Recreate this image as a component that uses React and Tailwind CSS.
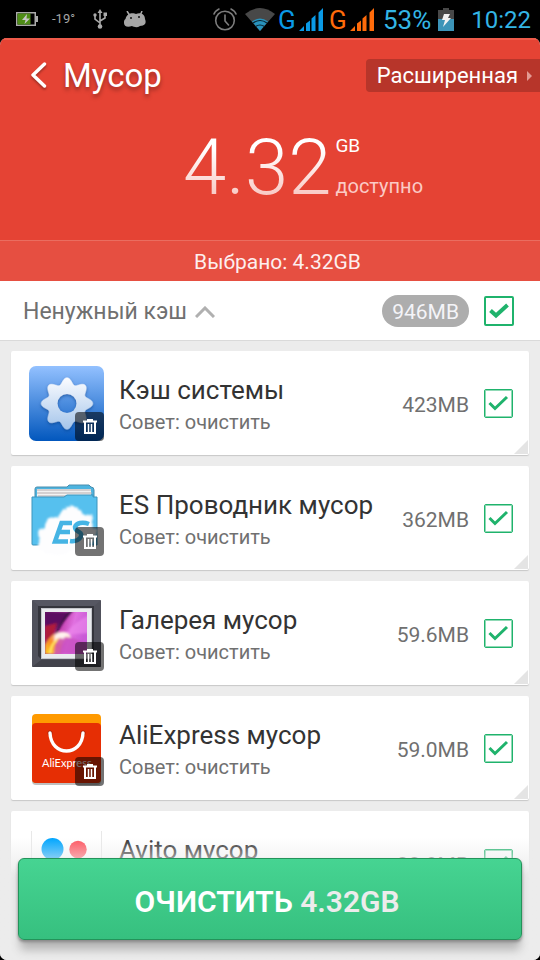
import React, { useState } from "react";

function gearPath(cx, cy) {
  const points = [];
  for (let i = 0; i < 144; i += 1) {
    const a = (i / 144) * Math.PI * 2;
    const r = 22.6 + 3.2 * Math.cos(a * 8);
    points.push(`${(cx + r * Math.sin(a)).toFixed(2)} ${(cy - r * Math.cos(a)).toFixed(2)}`);
  }
  return `M${points.join("L")}Z`;
}

function GearIcon() {
  return (
    <svg viewBox="0 0 75 75" className="size-full" aria-hidden="true">
      <defs>
        <linearGradient id="gearBg" x1="0" y1="0" x2="0" y2="1">
          <stop offset="0" stopColor="#93c1ff" />
          <stop offset="1" stopColor="#0257bd" />
        </linearGradient>
        <linearGradient id="gearFg" gradientUnits="userSpaceOnUse" x1="0" y1="12" x2="0" y2="64">
          <stop offset="0" stopColor="#fbfcff" />
          <stop offset="1" stopColor="#a3c4ea" />
        </linearGradient>
        <mask id="gearHole">
          <rect width="75" height="75" fill="#fff" />
          <circle cx="38" cy="37.500" r="9.500" fill="#000" />
        </mask>
        <filter id="gearShadow" x="-20%" y="-20%" width="140%" height="140%">
          <feDropShadow dx="0" dy="1.500" stdDeviation="1.500" floodColor="#003a86" floodOpacity="0.6" />
        </filter>
      </defs>
      <rect width="75" height="75" rx="7" fill="url(#gearBg)" />
      <g filter="url(#gearShadow)">
        <g mask="url(#gearHole)">
          <path d={gearPath(38, 37.5)} fill="url(#gearFg)" stroke="url(#gearFg)" strokeWidth="0.500" strokeLinejoin="round" />
        </g>
      </g>
    </svg>
  );
}

function FolderIcon() {
  return (
    <svg viewBox="0 0 75 75" className="size-full" aria-hidden="true">
      <defs>
        <filter id="cloudSoft" x="-20%" y="-20%" width="140%" height="140%">
          <feTurbulence type="fractalNoise" baseFrequency="0.150" numOctaves="3" seed="4" result="n" />
          <feDisplacementMap in="SourceGraphic" in2="n" scale="6" xChannelSelector="R" yChannelSelector="G" />
          <feGaussianBlur stdDeviation="0.900" />
        </filter>
      </defs>
      <path d="M6 18V8q0-2 2-2h30l2-2h20l2 2q3 0 3 3v9z" fill="#4db4e0" stroke="#4a8eae" />
      <path d="M8 8h54v9H8z" fill="#f2f2f2" />
      <path d="M8 9h54M8 12h55M9 15h54" stroke="#b5aeb0" />
      <path d="M3 16h32l3-2h26v2h4v48H4q-1 0-1-1z" fill="#56c0ee" stroke="#3c95bd" />
      <g filter="url(#cloudSoft)">
        <path d="M16 71c-5 0-8-6-5-10-5-6-3-14 5-14 0-8 6-13 14-11 2-13 19-14 24-3 9-1 12 7 9 12 6 6 5 15-2 18-4 8-12 9-18 6-8 6-18 7-27 2z" fill="#fdfdfe" />
      </g>
      <g fill="none" stroke="#45b4e4" strokeWidth="4.500">
        <path d="M43 42H32.500L26 60.500h13M29 51h12" />
        <path d="M60 43q-5-2-9-1t-5 4q0 3 4 5t1 6q-3 4-10 3" />
      </g>
    </svg>
  );
}

function GalleryIcon() {
  return (
    <svg viewBox="0 0 75 75" className="size-full" aria-hidden="true">
      <defs>
        <linearGradient id="photo" x1="0" y1="0" x2="1" y2="0.300">
          <stop offset="0" stopColor="#6b0c62" />
          <stop offset="0.400" stopColor="#c038a8" />
          <stop offset="0.700" stopColor="#e070e0" />
          <stop offset="1" stopColor="#c95bd6" />
        </linearGradient>
        <linearGradient id="flame" x1="0" y1="1" x2="0.700" y2="0">
          <stop offset="0" stopColor="#ffd21c" />
          <stop offset="0.500" stopColor="#f98a28" />
          <stop offset="1" stopColor="#fff1ec" />
        </linearGradient>
        <clipPath id="photoClip"><rect x="16" y="22" width="42" height="42" /></clipPath>
        <filter id="photoSoft"><feGaussianBlur stdDeviation="0.900" /></filter>
      </defs>
      <rect x="3" y="4" width="69" height="67" rx="1" fill="#50515b" />
      <path d="M3 4h69l-8 7H11z" fill="#565762" />
      <path d="M3 71h69l-8-7H12z" fill="#42434b" />
      <path d="M9 10h56v53H12l-3-3z" fill="#34353c" />
      <rect x="12" y="12" width="51" height="51" fill="#c4c6cb" />
      <rect x="13" y="13" width="49" height="49" fill="#e9ebee" />
      <g transform="translate(0 -6)" clipPath="url(#photoClip)">
        <rect x="16" y="22" width="42" height="42" fill="url(#photo)" />
        <g filter="url(#photoSoft)">
          <path d="M16 22h25Q30 33 22 47l-6 4z" fill="#5a0c60" />
          <path d="M16 36l12-3-4 14-8 5z" fill="#b01a3a" />
          <path d="M43 20Q31 33 27 44" stroke="#2c0838" strokeWidth="2" fill="none" />
          <path d="M60 25Q44 33 36 45l24-2z" fill="#ee8aee" opacity="0.600" />
          <path d="M16 64V54q9-14 20-12 5 1 6 6-9-1-11 16z" fill="url(#flame)" />
          <path d="M25 64q1-17 11-17 9 0 22 7v10z" fill="#c94fc0" opacity="0.800" />
          <path d="M26 45q6-5 12 0l-4 4q-5-3-9 3z" fill="#fff3f0" />
          <path d="M21 64q1-10 7-14" stroke="#fff06a" strokeWidth="2" fill="none" />
        </g>
      </g>
    </svg>
  );
}

function AliIcon() {
  return (
    <svg viewBox="0 0 75 75" className="size-full" aria-hidden="true">
      <rect x="3" y="5" width="69" height="69" rx="4" fill="#000" opacity="0.250" />
      <rect x="3" y="3" width="69" height="69" rx="4" fill="#ff9a00" />
      <path d="M3 16q0-4 4-4h61q4 0 4 4v52q0 4-4 4H7q-4 0-4-4z" fill="#e62e04" />
      <circle cx="21" cy="22" r="2.500" fill="#a91f05" />
      <circle cx="54" cy="22" r="2.500" fill="#a91f05" />
      <path d="M21 22c1 24 32 24 33 0" fill="none" stroke="#fff" strokeWidth="3.400" strokeLinecap="round" />
      <text x="13" y="56" fontFamily="Lato, sans-serif" fontSize="11" fill="#fff">AliExpress</text>
    </svg>
  );
}

function AvitoIcon() {
  return (
    <svg viewBox="0 0 75 75" className="size-full" aria-hidden="true">
      <path d="M2.500 5v67M72.500 5v67" stroke="#e8e8e8" />
      <circle cx="23.500" cy="23" r="11" fill="#00a6ff" />
      <circle cx="49" cy="23.500" r="8.700" fill="#ff5560" />
      <circle cx="24" cy="51" r="7" fill="#8fdc2c" />
      <circle cx="49" cy="51" r="13" fill="#a05fe0" />
    </svg>
  );
}

function TrashBadge() {
  return (
    <span className="absolute right-0 bottom-0 size-[29px] rounded-[4px] bg-black/55">
      <svg viewBox="0 0 29 29" className="size-full" fill="none" stroke="#fff" aria-hidden="true">
        <path d="M8 9.500h14" strokeWidth="2" />
        <path d="M12 8h6" strokeWidth="2" />
        <path d="M10 10v11h10V10" strokeWidth="2" />
        <path d="M13.500 12v8M16.500 12v8" strokeWidth="1.500" />
      </svg>
    </span>
  );
}

function CheckBox({ label, strong }) {
  const [checked, setChecked] = useState(true);
  return (
    <label className="grid shrink-0 place-items-center">
      <input
        type="checkbox"
        aria-label={label}
        checked={checked}
        onChange={() => setChecked(!checked)}
        className={
          strong
            ? "col-start-1 row-start-1 size-[30px] appearance-none rounded-[2px] border-2 border-[#1fb36c] bg-white"
            : "col-start-1 row-start-1 size-[29px] appearance-none rounded-[2px] border border-[#1fb36c] bg-white ring-1 ring-inset ring-[#1fb36c]/50"
        }
      />
      {checked && (
        <svg viewBox="0 0 30 30" className="pointer-events-none col-start-1 row-start-1 size-[30px]" fill="none" stroke="#1fb36c" strokeWidth={strong ? 4 : 3} aria-hidden="true">
          <path d={strong ? "M6.500 14.500L12 19.500L23.500 9" : "M6.500 15l5.500 5.500L24 9"} />
        </svg>
      )}
    </label>
  );
}

const items = [
  { name: "Кэш системы", size: "423MB", Icon: GearIcon },
  { name: "ES Проводник мусор", size: "362MB", Icon: FolderIcon },
  { name: "Галерея мусор", size: "59.6MB", Icon: GalleryIcon },
  { name: "AliExpress мусор", size: "59.0MB", Icon: AliIcon },
  { name: "Avito мусор", size: "38.9MB", Icon: AvitoIcon },
];

function ItemCard({ name, size, Icon }) {
  return (
    <li className="relative flex h-[104px] shrink-0 items-center rounded-[2px] bg-white pr-4 pl-[18px] shadow-[0_1px_1px_#c8c8c8]">
      <span className="relative size-[75px] shrink-0">
        <Icon />
        <TrashBadge />
      </span>
      <div className="ml-[15px] min-w-0 flex-1 pt-1.5 whitespace-nowrap">
        <h2 className="text-[26px] leading-8 text-[#333]">{name}</h2>
        <p className="text-[20px] leading-8 text-[#707070]">Совет: очистить</p>
      </div>
      <span className="mr-[14px] pt-1 text-[21px] leading-7 text-[#707070]">{size}</span>
      <CheckBox label={name} />
      <svg viewBox="0 0 14 14" className="absolute right-px bottom-px size-[14px]" aria-hidden="true">
        <path d="M14 0v14H0z" fill="#e4e4e4" />
      </svg>
    </li>
  );
}

function Signal({ color }) {
  return (
    <svg viewBox="0 0 24 24" className="ml-[3px] size-6" fill={color} aria-hidden="true">
      <path d="M0 23l5-5v5zM7 15.500l4-3v10.500H7zM12.500 10.500l4-3.500v16h-4zM19.500 4.500L24 0v23h-4.500z" />
    </svg>
  );
}

function StatusBar() {
  return (
    <div className="flex h-[38px] shrink-0 items-center justify-between pr-[9px] pl-4">
      <div className="flex items-center text-[#a6a6a6]">
        <svg viewBox="0 0 22 14" className="h-[14px] w-[22px]" aria-hidden="true">
          <path d="M.75.75h18.500v12.500H.75z" fill="#000" stroke="#aaa" strokeWidth="1.500" />
          <path d="M1.500 1.500h13v11h-13z" fill="#4e8d16" />
          <path d="M20 4h2v6h-2z" fill="#aaa" />
          <path d="M11 2L6 8h3.500L8.500 12 14 6.500h-3.500z" fill="#c6c6c6" />
        </svg>
        <span className="ml-[14px] w-[22px] text-[13px] whitespace-nowrap">-19°</span>
        <svg viewBox="0 0 14 20" className="ml-[19px] h-5 w-[14px]" fill="none" stroke="#aaa" strokeWidth="1.600" aria-hidden="true">
          <path d="M7 3v14M7 14l-5-4V6M7 12l5-3V5" />
          <path d="M7 0l2.500 4h-5z" fill="#aaa" stroke="none" />
          <circle cx="7" cy="17.500" r="2.300" fill="#aaa" stroke="none" />
          <circle cx="2" cy="6" r="1.700" fill="#aaa" stroke="none" />
          <path d="M10.500 3.500h3.500v3.500h-3.500z" fill="#aaa" stroke="none" />
        </svg>
        <svg viewBox="0 0 22 17" className="ml-[17px] h-[17px] w-[22px]" aria-hidden="true">
          <path d="M3 0l3 5M18 0l-2 5" stroke="#aaa" strokeWidth="1.500" />
          <path d="M1.500 8C3 1 10 2 12 3c4-2 9 0 9 5 2 5-1 7-5 7-3 2-6 1-8 0-5 2-8 0-8-3 0-2 0-3 1.500-4z" fill="#a6a6a6" />
          <circle cx="7" cy="7" r="1" fill="#111" />
          <circle cx="15" cy="6" r="1" fill="#111" />
        </svg>
      </div>
      <div className="flex items-center pt-px text-[#33b5e5]">
        <svg viewBox="0 0 24 23" className="h-[23px] w-6" fill="none" stroke="#7c7c7c" strokeWidth="1.600" strokeLinecap="round" aria-hidden="true">
          <circle cx="12" cy="12.500" r="9.300" />
          <path d="M12 7v6l3.500 4M1 6q1-3 5-5M23 6q-1-3-5-5" />
        </svg>
        <svg viewBox="0 0 30 23" className="ml-2 h-[23px] w-[30px]" aria-hidden="true">
          <path d="M0 6Q15-6 30 6L15 23z" fill="#484848" />
          <path d="M7 13.500q8-6 16 0L15 23z" fill="#2993bd" />
          <path d="M8 15q7-5 14 0M10.500 18.500q4.500-3 9 0" fill="none" stroke="#07222e" strokeWidth="1.200" />
        </svg>
        <span className="ml-[3px] w-[18px] text-[26px] leading-9 text-[#0a9ae6]">G</span>
        <Signal color="#0a9ae6" />
        <span className="ml-[6px] w-[18px] text-[26px] leading-9 text-[#ff6b0a]">G</span>
        <Signal color="#ff6b0a" />
        <span className="ml-[9px] text-[26px] leading-9">53%</span>
        <svg viewBox="0 0 16 23" className="ml-[7px] h-[23px] w-4" aria-hidden="true">
          <path d="M0 2h5V0h6v2h5v9H0z" fill="#484848" />
          <path d="M0 11h16v12H0z" fill="#3c94b8" />
          <path d="M6 6h6l-2 4h3l-8 9 2-7H4z" fill="#f2f2f2" />
        </svg>
        <time className="ml-[17px] text-[24px] leading-9">10:22</time>
      </div>
    </div>
  );
}

export default function App() {
  return (
    <div className="flex h-screen flex-col overflow-hidden bg-black font-['Roboto',sans-serif]">
      <StatusBar />
      <main className="relative flex min-h-0 flex-1 flex-col overflow-hidden rounded-[7px] bg-[#ececec]">
        <header className="shrink-0 border-t-2 border-[#ef5a4a] bg-[#e54334] text-white">
          <div className="flex h-[74px] items-start justify-between">
            <button type="button" className="flex items-center pt-4 pl-[31px] text-[33px] leading-10 [text-shadow:0_3px_4px_rgb(0_0_0/0.35)]">
              <svg viewBox="0 0 16 28" className="mr-4 h-7 w-4 drop-shadow-[0_2px_1px_rgb(0_0_0/0.3)]" fill="none" stroke="#fff" strokeWidth="3.400" strokeLinecap="round" strokeLinejoin="round" aria-hidden="true">
                <path d="M13.500 2L2 13l11.500 11" />
              </svg>
              Мусор
            </button>
            <button type="button" className="mt-[19px] flex h-[33px] items-center rounded-l-[4px] bg-[#b7352a] pr-2 pl-[11px] text-[22px]">
              Расширенная
              <svg viewBox="0 0 5 10" className="ml-[9px] h-[10px] w-[5px]" aria-hidden="true">
                <path d="M0 0l5 5-5 5z" fill="#e39a93" />
              </svg>
            </button>
          </div>
          <div className="flex h-[126px] justify-center pt-3 pl-[66px]">
            <span className="bg-linear-to-b from-white from-20% to-[#f0a39c] to-90% bg-clip-text text-[78px] leading-[84px] font-light text-transparent">4.32</span>
            <div className="flex flex-col pt-2 pl-1">
              <span className="text-[19px] leading-6">GB</span>
              <span className="pt-3.5 text-[20px] leading-7 text-[#fbcac5]">доступно</span>
            </div>
          </div>
          <p className="h-[41px] border-t border-[#ea6d60] bg-[#e64f41] pl-[15px] text-center text-[21px] leading-[42px] text-[#fdeeee]">Выбрано: 4.32GB</p>
        </header>

        <section className="flex h-[60px] shrink-0 items-center border-b border-[#dadada] bg-white pr-[26px] pl-[23px]">
          <button type="button" className="flex items-center pt-0.5 text-[23px] leading-8 text-[#707070]">
            Ненужный кэш
            <svg viewBox="0 0 20 12" className="ml-2 h-3 w-5" fill="none" stroke="#b0b0b0" strokeWidth="3" aria-hidden="true">
              <path d="M1 11l9-9 9 9" />
            </svg>
          </button>
          <span className="mr-[15px] ml-auto h-8 rounded-full bg-[#adadad] px-[10px] pt-px text-[21px] leading-8 text-[#f4f4f8]">946MB</span>
          <CheckBox label="Ненужный кэш" strong />
        </section>

        <ul className="flex min-h-0 flex-1 flex-col gap-[11px] overflow-hidden px-[11px] pt-2.5">
          {items.map((item) => (
            <ItemCard key={item.name} {...item} />
          ))}
        </ul>

        <footer className="absolute inset-x-0 bottom-0 bg-linear-to-b from-[#ececec]/0 to-[#ececec] to-30% px-[18px] pt-5 pb-5">
          <button type="button" className="h-[82px] w-full rounded-[6px] border border-[#23935a] bg-linear-to-b from-[#46d492] to-[#36c07f] pt-1 pr-1.5 text-[30px] font-semibold text-white shadow-[0_2px_3px_#888,0_12px_10px_-2px_#b5b5b5]">
            ОЧИСТИТЬ <span className="text-[#ececec]">4.32GB</span>
          </button>
        </footer>
      </main>
    </div>
  );
}
